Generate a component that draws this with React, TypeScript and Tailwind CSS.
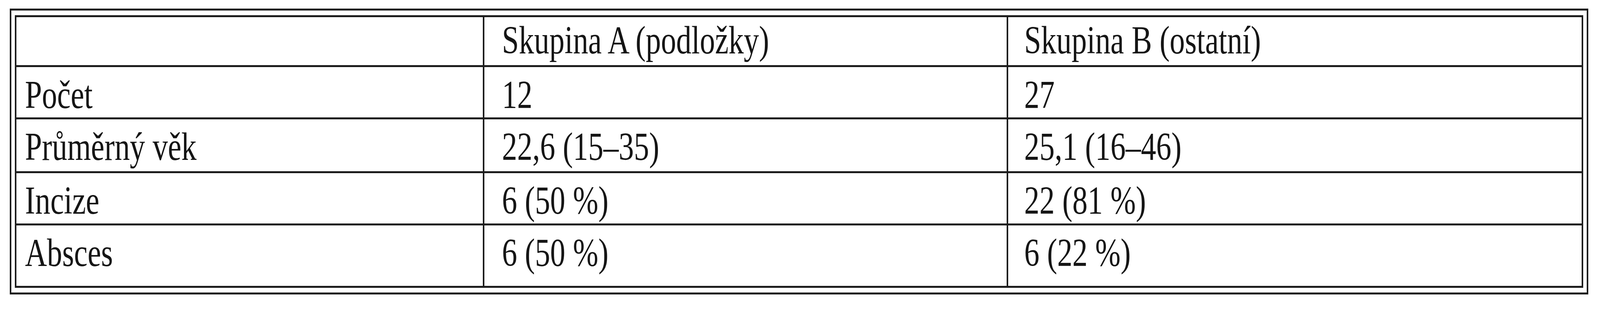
type Row = {
    label: string;
    a: string;
    b: string;
    h: string;
    pt: string;
};

const rows: Row[] = [
    { label: "", a: "Skupina A (podložky)", b: "Skupina B (ostatní)", h: "h-[123px]", pt: "pt-[8px]" },
    { label: "Počet", a: "12", b: "27", h: "h-[129px]", pt: "pt-[20px]" },
    { label: "Průměrný věk", a: "22,6 (15–35)", b: "25,1 (16–46)", h: "h-[133px]", pt: "pt-[19px]" },
    { label: "Incize", a: "6 (50 %)", b: "22 (81 %)", h: "h-[129px]", pt: "pt-[19px]" },
    { label: "Absces", a: "6 (50 %)", b: "6 (22 %)", h: "h-[155px]", pt: "pt-[19px]" },
];

function Cell({ text }: { text: string }) {
    return (
        <span className="inline-block origin-left scale-x-[0.764] whitespace-nowrap">
            {text}
        </span>
    );
}

export default function App() {
    return (
        <main className="min-h-screen bg-white pt-[22px] pl-[25px]">
            {/* outer frame */}
            <div className="w-[4041px] border-x-[4px] border-y-[5px] border-[#1c1c1c] px-[9px] py-[12px]">
                {/* inner frame */}
                <div className="border-x-[4px] border-y-[5px] border-[#1c1c1c] font-['Liberation_Serif','Times_New_Roman',serif] text-[102px] leading-none text-[#151515]">
                    {rows.map((row, i) => (
                        <div
                            key={i}
                            className={`grid grid-cols-[1194px_1341px_1fr] ${i > 0 ? "border-t-[5px] border-[#1c1c1c]" : ""}`}
                        >
                            <div className={`${row.h} ${row.pt} pl-[22px]`}>
                                <Cell text={row.label} />
                            </div>
                            <div className={`${row.h} ${row.pt} pl-[45px] border-l-[4px] border-[#1c1c1c]`}>
                                <Cell text={row.a} />
                            </div>
                            <div className={`${row.h} ${row.pt} pl-[41px] border-l-[4px] border-[#1c1c1c]`}>
                                <Cell text={row.b} />
                            </div>
                        </div>
                    ))}
                </div>
            </div>
        </main>
    );
}
